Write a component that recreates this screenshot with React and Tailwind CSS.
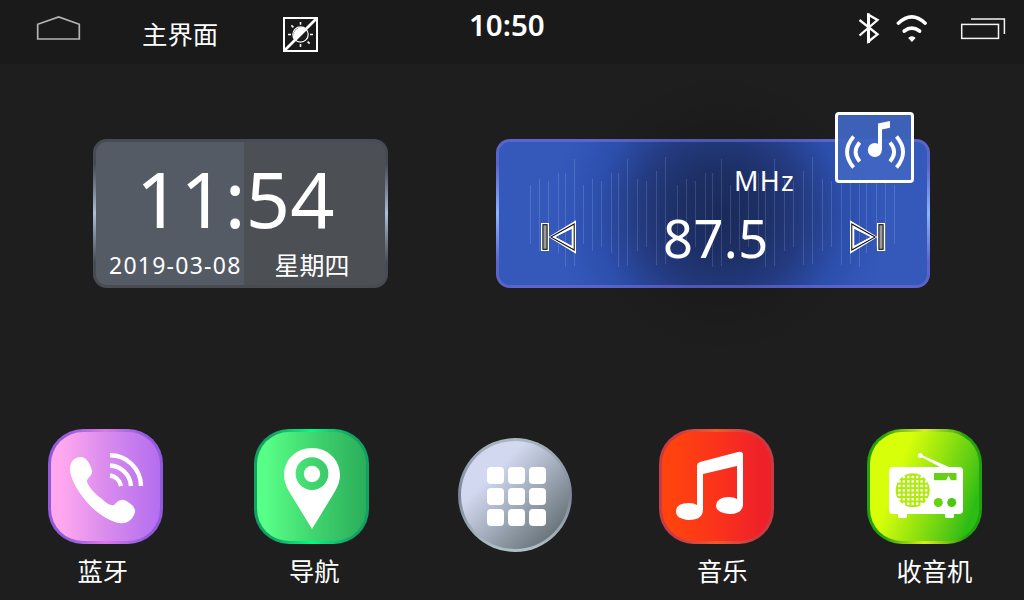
import React from "react";

const CJK = "font-['Noto_Sans_CJK_SC',sans-serif]";
const LATIN = "font-['Noto_Sans','Noto_Sans_CJK_SC',sans-serif]";

// x, top, bottom of each tuning line inside the radio card
const TUNER_LINES = [
  [34, 46, 105], [43, 40, 112], [52, 42, 108], [62, 34, 114], [69, 34, 128], [78, 20, 127],
  [87, 46, 105], [96, 40, 112], [105, 42, 108], [115, 34, 114], [122, 34, 128], [131, 20, 127],
  [141, 40, 112], [150, 42, 108], [160, 32, 126], [169, 18, 125],
  [181, 46, 105], [190, 40, 112], [199, 42, 108], [209, 34, 114], [216, 34, 128], [225, 20, 127],
  [234, 46, 105], [243, 40, 112], [252, 42, 108], [262, 34, 114], [269, 34, 128], [278, 20, 127],
  [288, 40, 112], [297, 42, 108], [307, 32, 126], [316, 18, 125],
  [326, 40, 112], [335, 42, 108], [345, 34, 126], [354, 20, 125], [363, 33, 128], [370, 21, 114],
  [380, 36, 108], [389, 36, 112], [398, 46, 105],
];

function StatusBar() {
  return (
    <header className="flex h-16 items-start bg-[#1a1a1a] pl-9 text-white">
      <svg className="mt-[14px] shrink-0" width="46" height="28" viewBox="0 0 46 28" fill="none" stroke="#b4b4b4" strokeWidth="1.7">
        <path d="M1.7 25V10.3L22.7 3L43.3 10.3V25Z" />
      </svg>
      <h1 className={`${CJK} ml-[60px] mt-[19px] w-[76px] shrink-0 whitespace-nowrap text-[25.4px] leading-7`}>主界面</h1>
      <svg className="ml-[65px] mt-[17px] shrink-0" width="35" height="35" viewBox="0 0 35 35" fill="none" stroke="#fff">
        <rect x="1" y="1" width="33" height="33" strokeWidth="2" />
        <circle cx="17.5" cy="17.5" r="7.7" strokeWidth="1.2" />
        <path d="M11.7 23.5A8.5 8.5 0 0 1 23.5 11.7Z" fill="#fff" stroke="none" />
        <path d="M17.5 5v2.8M17.5 27v3M5 17.5h3M27 17.5h3M8.4 8.4l2 2M24.6 24.6l2 2" strokeWidth="1.5" />
        <path d="M2 33L33 2" strokeWidth="2.6" />
      </svg>
      <time className={`${LATIN} ml-[151px] mt-[8px] w-[79px] shrink-0 whitespace-nowrap text-[29.5px] font-semibold leading-[34px]`}>10:50</time>
      <svg className="ml-[310px] mt-[12px] shrink-0" width="24" height="32" viewBox="0 0 24 32" fill="none" stroke="#fff" strokeWidth="2.3">
        <path d="M1.5 8L19.5 22.3L10.5 29.5V2.8L19.5 8L1.5 23.5" />
        <path d="M10.5 1.5V31" strokeWidth="3" />
      </svg>
      <svg className="ml-[13px] mt-[13px] shrink-0" width="34" height="30" viewBox="0 0 34 30" fill="none" stroke="#fff" strokeLinecap="round">
        <path d="M3.3 10.2Q16.8 -2.5 30.2 10.2" strokeWidth="3.4" />
        <path d="M9.3 18Q16.8 12.3 24.5 18" strokeWidth="3.8" />
        <path d="M14.2 25Q16.9 23 19.6 25L16.9 28Z" fill="#fff" strokeWidth="1.4" />
      </svg>
      <svg className="ml-[31px] mt-[16px] shrink-0" width="48" height="26" viewBox="0 0 48 26" fill="none" stroke="#f4f4f4" strokeWidth="1.5">
        <rect x="1.7" y="8.4" width="36.8" height="14" />
        <path d="M11 3H44.4V18" />
      </svg>
    </header>
  );
}

function ClockCard() {
  return (
    <section className="h-[149px] w-[295px] rounded-[14px] bg-linear-to-b from-[#484c52] from-17% via-[#a9bedb] via-50% to-[#484c52] to-83% p-[3px]">
      <div className={`${LATIN} h-full rounded-[11px] bg-linear-to-r from-[#555b65] from-[148.5px] to-[#4c4f54] to-[148.5px] text-white`}>
        <p className="ml-[40px] whitespace-nowrap pt-[22px] text-[77.5px] leading-[68px] tracking-[0.1px]">11:54</p>
        <div className="mt-4 flex items-start pl-[13px]">
          <span className="w-[165.5px] whitespace-nowrap text-[23px] leading-[34px] tracking-[1.25px]">2019-03-08</span>
          <span className={`${CJK} -mt-px whitespace-nowrap text-[25px] leading-[34px]`}>星期四</span>
        </div>
      </div>
    </section>
  );
}

function SkipIcon({ next }) {
  return (
    <svg className={next ? "-scale-x-100" : ""} width="36" height="36" viewBox="0 0 36 36" fill="none">
      <rect x="1" y="3" width="8" height="28" fill="#fff" />
      <rect x="2.9" y="4.7" width="4.2" height="24.6" fill="#9b9b9b" stroke="#111" strokeWidth="1.1" />
      <path fillRule="evenodd" d="M8.6 17L36 0.3V33.7ZM15 17L33 8V27Z" fill="#fff" />
      <path d="M11 17L34.2 4V30Z" stroke="#111" strokeWidth="1.1" />
      <path d="M14 17L32.4 7.6V26.8Z" stroke="#fff" strokeWidth="1.4" />
    </svg>
  );
}

function RadioBadge() {
  return (
    <div className="absolute left-[339px] top-[-27px] h-[71px] w-[79px] rounded-[4px] border-[3px] border-white bg-[#4065c1]/95">
      <svg width="73" height="65" viewBox="0 0 73 65" fill="none" stroke="#fff">
        <ellipse cx="36.8" cy="35" rx="7" ry="7" fill="#fff" stroke="none" />
        <path d="M40 35V8.6L52 6v6.7L44 14.5V35Z" fill="#fff" stroke="none" />
        <path d="M21.7 27.5Q13.5 37 21.7 46.5M52 27.5Q60.2 37 52 46.5" strokeWidth="3.8" />
        <path d="M15.6 21.5Q2.5 37 15.6 52.5M58.5 21.5Q71.6 37 58.5 52.5" strokeWidth="3.8" />
      </svg>
    </div>
  );
}

function RadioCard() {
  return (
    <section className="relative h-[149px] w-[434px] rounded-[14px] bg-linear-to-b from-[#5b64ca] from-17% via-[#8db2ff] via-50% to-[#5b64ca] to-83% p-[3px]">
      <div className="h-full rounded-[11px] bg-[#3559bb] bg-[radial-gradient(circle_170px_at_222px_71px,rgba(8,10,25,.5)_0%,rgba(8,10,30,.41)_28%,rgba(10,15,50,.3)_50%,rgba(10,40,130,.18)_72%,transparent_100%)]" />
      <svg className="absolute left-0 top-0" width="434" height="149" stroke="#8fa5dc" strokeOpacity="0.3" strokeWidth="1">
        {TUNER_LINES.map(([x, top, bottom]) => (
          <path key={x} d={`M${x + 0.5} ${top}V${bottom}`} />
        ))}
      </svg>
      <div className="pointer-events-none absolute left-[75px] top-[-75px] size-[300px] rounded-full bg-[radial-gradient(closest-side,rgba(0,0,0,.16)_25%,rgba(0,0,0,.12)_50%,rgba(0,0,0,.03)_80%,transparent_100%)]" />
      <div className={`${LATIN} absolute inset-0 flex items-start text-white`}>
        <div className="ml-[44px] mt-[81px]"><SkipIcon /></div>
        <div className="ml-[85px] mt-[24px] w-[160px]">
          <p className="pl-[73px] text-[27px] leading-9 tracking-[1.3px]">MHz</p>
          <p className="mt-[9px] whitespace-nowrap pl-[2px] text-[52.5px] leading-[60px] tracking-[0.4px]">87.5</p>
        </div>
        <div className="ml-[29px] mt-[81px]"><SkipIcon next /></div>
      </div>
      <RadioBadge />
    </section>
  );
}

function AppTile({ label, frame, face, inset, className, children }) {
  return (
    <div className={`w-[115px] shrink-0 ${className}`}>
      <div className={`size-[115px] rounded-[35px] p-[3px] ${frame}`}>
        <div className={`size-full rounded-[32px] ${face}`}>
          <svg width="109" height="109" viewBox="3 3 109 109">{children}</svg>
        </div>
      </div>
      <p className={`${CJK} mt-[12px] whitespace-nowrap text-[25.3px] leading-7 text-white ${inset}`}>{label}</p>
    </div>
  );
}

function RadioArt() {
  const dots = [];
  for (let row = 0; row < 7; row++) {
    for (let col = 0; col < 7; col++) {
      const x = 32.4 + col * 4.45;
      const y = 48 + row * 4.45;
      if (Math.hypot(x - 45.7, y - 61.3) < 16.2) dots.push([x, y]);
    }
  }
  return (
    <>
      <circle cx="53.3" cy="26.5" r="2.5" fill="#fff" />
      <path d="M54 25.7L82 38H73L53.5 27.5Z" fill="#fff" />
      <rect x="22" y="38" width="74" height="47" rx="4" fill="#fff" />
      <path d="M31 83h9v4.5q0 1.5-1.5 1.5h-6q-1.5 0-1.5-1.5ZM78 83h9v4.5q0 1.5-1.5 1.5h-6q-1.5 0-1.5-1.5Z" fill="#fff" />
      <circle cx="45.7" cy="61.3" r="17" fill="#b0ea0e" />
      {dots.map(([x, y]) => (
        <rect key={`${x}-${y}`} x={x - 1.2} y={y - 1.2} width="2.4" height="2.4" fill="#fff" />
      ))}
      <rect x="67" y="44" width="22.5" height="7.2" fill="#66d112" />
      <path d="M81.5 46.5L84 51.5H79Z" fill="#fff" />
      <circle cx="71.3" cy="73.5" r="4.5" fill="#68d212" />
      <circle cx="84.7" cy="73.5" r="4.5" fill="#4cc814" />
    </>
  );
}

function LauncherButton() {
  return (
    <div className="ml-[89px] mt-[9px] size-[114px] shrink-0 rounded-full bg-linear-to-b from-[#aab8c0] via-[#7a859c] to-[#b2c2c8] p-[3px]">
      <div className="flex size-full items-center justify-center rounded-full bg-linear-135 from-[#d2d8ef] from-30% via-[#a0aab9] via-56% to-[#6d797e] to-84%">
        <div className="ml-[3px] mt-[3px] grid grid-cols-3 gap-[4px]">
          {Array.from({ length: 9 }, (_, i) => (
            <span key={i} className="size-[16.7px] rounded-[4px] bg-white" />
          ))}
        </div>
      </div>
    </div>
  );
}

function Dock() {
  return (
    <nav className="flex items-start pl-12">
      <AppTile
        label="蓝牙"
        className=""
        inset="pl-[29.5px]"
        frame="bg-linear-to-r from-[#925adb] from-15% via-[#da78e8] to-[#925adb] to-85%"
        face="bg-linear-to-r from-[#ffa8ef] from-10% via-[#d88aed] via-52% to-[#b46df0]"
      >
        <path d="M34 28C27 27 21 33 22 42C24 55 36 72 48 82C59 91 73 98 81 92C84 90 86 87 87 83C88 79 82 73 76 71C72 70 69 73 66 76C63 77 58 74 54 70C47 65 39 56 39 52C39 49 45 46 44 42C43 36 39 29 34 28Z" fill="#fff" />
        <path d="M62 46.5A13 13 0 0 1 73 57M62 36.5A22 22 0 0 1 83 57M62 26.3A31 31 0 0 1 93 57" fill="none" stroke="#fff" strokeWidth="4.4" />
      </AppTile>
      <AppTile
        label="导航"
        className="ml-[91px]"
        inset="pl-[35px]"
        frame="bg-linear-to-r from-[#12a064] from-15% via-[#00fc86] to-[#12a064] to-85%"
        face="bg-linear-to-r from-[#58ff87] from-8% via-[#40d56f] via-52% to-[#2bae5a]"
      >
        <path fillRule="evenodd" d="M58 19C42 19 30 31 30 46C30 53 33 59 36 64L58 100L80 64C83 59 86 53 86 46C86 31 74 19 58 19ZM58 28.2A16.4 16.4 0 1 1 58 61A16.4 16.4 0 1 1 58 28.2Z" fill="#fff" />
        <circle cx="58" cy="45" r="8.2" fill="#fff" />
      </AppTile>
      <LauncherButton />
      <AppTile
        label="音乐"
        className="ml-[87px]"
        inset="pl-[38px]"
        frame="bg-linear-to-r from-[#c93a42] from-15% via-[#ed5a2b] to-[#c93a42] to-85%"
        face="bg-linear-to-r from-[#ff430e] from-10% via-[#fb331b] via-50% to-[#ef2128] to-90%"
      >
        <path d="M38 37Q38 34 41 33L79 23Q84 22 84 26V76Q83 85 70.5 85Q57 84 57 76.5Q58 68 70 68Q75 68 78 70V37L44 45V80Q44 91 30 91Q17 90 17 82.5Q17 74 30 74Q35 74 38 76Z" fill="#fff" />
      </AppTile>
      <AppTile
        label="收音机"
        className="ml-[93px]"
        inset="pl-[29.5px]"
        frame="bg-linear-to-r from-[#24a20c] from-15% via-[#d6ef20] to-[#24a20c] to-85%"
        face="bg-linear-110 from-[#d8ff0a] from-28% via-[#7fdb10] via-62% to-[#2bbd16] to-88%"
      >
        <RadioArt />
      </AppTile>
    </nav>
  );
}

export default function App() {
  return (
    <div className="flex h-[600px] w-[1024px] flex-col overflow-hidden bg-[#1e1e1e]">
      <StatusBar />
      <main className="flex h-[365px] shrink-0 items-start gap-[108px] pl-[93px] pt-[75px]">
        <ClockCard />
        <RadioCard />
      </main>
      <Dock />
    </div>
  );
}
